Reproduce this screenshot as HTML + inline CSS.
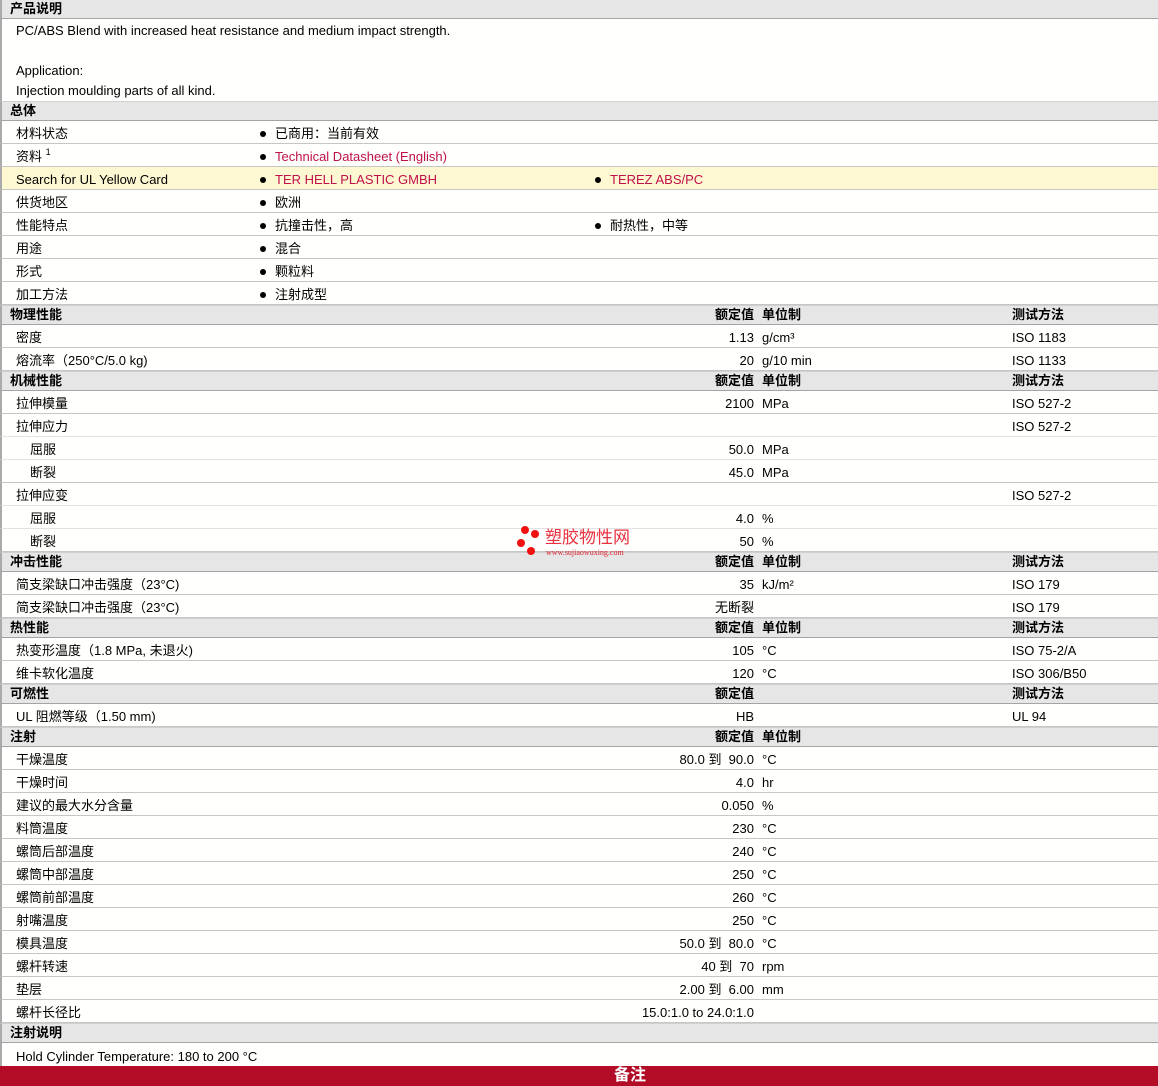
<!DOCTYPE html>
<html><head><meta charset="utf-8"><style>
*{margin:0;padding:0;box-sizing:border-box}
body{width:1158px;height:1086px;background:#fff;font-family:"Liberation Sans","Noto Sans CJK SC",sans-serif;font-size:13px;color:#000;position:relative;overflow:hidden}
.h,.r{position:absolute;left:0;width:1158px;border-left:2px solid #aaa}
.h{height:20px;background:#e6e6e6;border-top:1px solid #d0d0d0;border-bottom:1px solid #a4a4a4;font-weight:bold}
.r{height:23px;border-bottom:1px solid #c6c6c6;background:#fffffd}
.r.l{border-bottom-color:#e2e2e2}
.h>span,.r>span{position:absolute;top:50%;margin-top:-6px;height:16px;line-height:16px;white-space:nowrap}
.h>span{margin-top:-8px}
.a{left:14px}.s{left:28px}
.ht{left:8px}
.v{right:404px;text-align:right}
.u{left:760px}
.t{left:1010px}
.b1{left:258px}.b2{left:593px}
.dot{display:inline-block;width:6px;height:6px;border-radius:50%;background:#000;margin-right:9px;vertical-align:1px}
.lk{color:#c0104a}
sup{font-size:9px;line-height:0;vertical-align:6px}
.d{position:absolute;left:14px;line-height:16px;white-space:nowrap}
</style></head><body>
<div class="h" style="top:0;height:19px;border-top:none"><span class="ht">产品说明</span></div>
<div style="position:absolute;top:19px;left:0;width:1158px;height:82px;border-left:2px solid #aaa;background:#fffffd">
<div class="d" style="top:4px">PC/ABS Blend with increased heat resistance and medium impact strength.</div>
<div class="d" style="top:44px">Application:</div>
<div class="d" style="top:64px">Injection moulding parts of all kind.</div>
</div>
<div class="h" style="top:101px"><span class="ht">总体</span></div>
<div class="r" style="top:121px"><span class="a">材料状态</span><span class="b1"><i class="dot"></i>已商用：当前有效</span></div>
<div class="r" style="top:144px"><span class="a">资料 <sup>1</sup></span><span class="b1"><i class="dot"></i><span class="lk">Technical Datasheet (English)</span></span></div>
<div class="r" style="top:167px;background:#fdf8d2"><span class="a">Search for UL Yellow Card</span><span class="b1"><i class="dot"></i><span class="lk">TER HELL PLASTIC GMBH</span></span><span class="b2"><i class="dot"></i><span class="lk">TEREZ ABS/PC</span></span></div>
<div class="r" style="top:190px"><span class="a">供货地区</span><span class="b1"><i class="dot"></i>欧洲</span></div>
<div class="r" style="top:213px"><span class="a">性能特点</span><span class="b1"><i class="dot"></i>抗撞击性，高</span><span class="b2"><i class="dot"></i>耐热性，中等</span></div>
<div class="r" style="top:236px"><span class="a">用途</span><span class="b1"><i class="dot"></i>混合</span></div>
<div class="r" style="top:259px"><span class="a">形式</span><span class="b1"><i class="dot"></i>颗粒料</span></div>
<div class="r" style="top:282px"><span class="a">加工方法</span><span class="b1"><i class="dot"></i>注射成型</span></div>

<div class="h" style="top:305px"><span class="ht">物理性能</span><span class="v">额定值</span><span class="u">单位制</span><span class="t">测试方法</span></div>
<div class="r" style="top:325px"><span class="a">密度</span><span class="v">1.13</span><span class="u">g/cm³</span><span class="t">ISO 1183</span></div>
<div class="r" style="top:348px"><span class="a">熔流率（250°C/5.0 kg)</span><span class="v">20</span><span class="u">g/10 min</span><span class="t">ISO 1133</span></div>

<div class="h" style="top:371px"><span class="ht">机械性能</span><span class="v">额定值</span><span class="u">单位制</span><span class="t">测试方法</span></div>
<div class="r" style="top:391px"><span class="a">拉伸模量</span><span class="v">2100</span><span class="u">MPa</span><span class="t">ISO 527-2</span></div>
<div class="r l" style="top:414px"><span class="a">拉伸应力</span><span class="t">ISO 527-2</span></div>
<div class="r l" style="top:437px"><span class="s">屈服</span><span class="v">50.0</span><span class="u">MPa</span></div>
<div class="r" style="top:460px"><span class="s">断裂</span><span class="v">45.0</span><span class="u">MPa</span></div>
<div class="r l" style="top:483px"><span class="a">拉伸应变</span><span class="t">ISO 527-2</span></div>
<div class="r l" style="top:506px"><span class="s">屈服</span><span class="v">4.0</span><span class="u">%</span></div>
<div class="r" style="top:529px"><span class="s">断裂</span><span class="v">50</span><span class="u">%</span></div>

<div class="h" style="top:552px"><span class="ht">冲击性能</span><span class="v">额定值</span><span class="u">单位制</span><span class="t">测试方法</span></div>
<div class="r" style="top:572px"><span class="a">简支梁缺口冲击强度（23°C)</span><span class="v">35</span><span class="u">kJ/m²</span><span class="t">ISO 179</span></div>
<div class="r" style="top:595px"><span class="a">简支梁缺口冲击强度（23°C)</span><span class="v">无断裂</span><span class="t">ISO 179</span></div>

<div class="h" style="top:618px"><span class="ht">热性能</span><span class="v">额定值</span><span class="u">单位制</span><span class="t">测试方法</span></div>
<div class="r" style="top:638px"><span class="a">热变形温度（1.8 MPa, 未退火)</span><span class="v">105</span><span class="u">°C</span><span class="t">ISO 75-2/A</span></div>
<div class="r" style="top:661px"><span class="a">维卡软化温度</span><span class="v">120</span><span class="u">°C</span><span class="t">ISO 306/B50</span></div>

<div class="h" style="top:684px"><span class="ht">可燃性</span><span class="v">额定值</span><span class="t">测试方法</span></div>
<div class="r" style="top:704px"><span class="a">UL 阻燃等级（1.50 mm)</span><span class="v">HB</span><span class="t">UL 94</span></div>

<div class="h" style="top:727px"><span class="ht">注射</span><span class="v">额定值</span><span class="u">单位制</span></div>
<div class="r" style="top:747px"><span class="a">干燥温度</span><span class="v">80.0 到&nbsp; 90.0</span><span class="u">°C</span></div>
<div class="r" style="top:770px"><span class="a">干燥时间</span><span class="v">4.0</span><span class="u">hr</span></div>
<div class="r" style="top:793px"><span class="a">建议的最大水分含量</span><span class="v">0.050</span><span class="u">%</span></div>
<div class="r" style="top:816px"><span class="a">料筒温度</span><span class="v">230</span><span class="u">°C</span></div>
<div class="r" style="top:839px"><span class="a">螺筒后部温度</span><span class="v">240</span><span class="u">°C</span></div>
<div class="r" style="top:862px"><span class="a">螺筒中部温度</span><span class="v">250</span><span class="u">°C</span></div>
<div class="r" style="top:885px"><span class="a">螺筒前部温度</span><span class="v">260</span><span class="u">°C</span></div>
<div class="r" style="top:908px"><span class="a">射嘴温度</span><span class="v">250</span><span class="u">°C</span></div>
<div class="r" style="top:931px"><span class="a">模具温度</span><span class="v">50.0 到&nbsp; 80.0</span><span class="u">°C</span></div>
<div class="r" style="top:954px"><span class="a">螺杆转速</span><span class="v">40 到&nbsp; 70</span><span class="u">rpm</span></div>
<div class="r" style="top:977px"><span class="a">垫层</span><span class="v">2.00 到&nbsp; 6.00</span><span class="u">mm</span></div>
<div class="r" style="top:1000px"><span class="a">螺杆长径比</span><span class="v">15.0:1.0 to 24.0:1.0</span></div>

<div class="h" style="top:1023px"><span class="ht">注射说明</span></div>
<div class="r" style="top:1043px;border-bottom:none"><span class="a">Hold Cylinder Temperature: 180 to 200 °C</span></div>
<div style="position:absolute;top:1066px;left:0;width:1158px;height:20px;background:#b20c26;color:#fff;font-weight:bold;font-size:16px;line-height:20px"><span style="position:absolute;left:614px;top:0">备注</span></div>

<div style="position:absolute;left:516px;top:526px;width:130px;height:34px">
<i style="position:absolute;left:5px;top:0;width:8px;height:8px;border-radius:50%;background:#f01010"></i>
<i style="position:absolute;left:15px;top:4px;width:8px;height:8px;border-radius:50%;background:#f01010"></i>
<i style="position:absolute;left:1px;top:13px;width:8px;height:8px;border-radius:50%;background:#f01010"></i>
<i style="position:absolute;left:11px;top:21px;width:8px;height:8px;border-radius:50%;background:#f01010"></i>
<span style="position:absolute;left:29px;top:2px;color:#e83040;font-size:17px;white-space:nowrap;line-height:20px">塑胶物性网</span>
<span style="position:absolute;left:30px;top:22px;color:#e02030;font-size:8px;font-family:'Liberation Serif',serif;white-space:nowrap">www.sujiaowuxing.com</span>
</div>
</body></html>
